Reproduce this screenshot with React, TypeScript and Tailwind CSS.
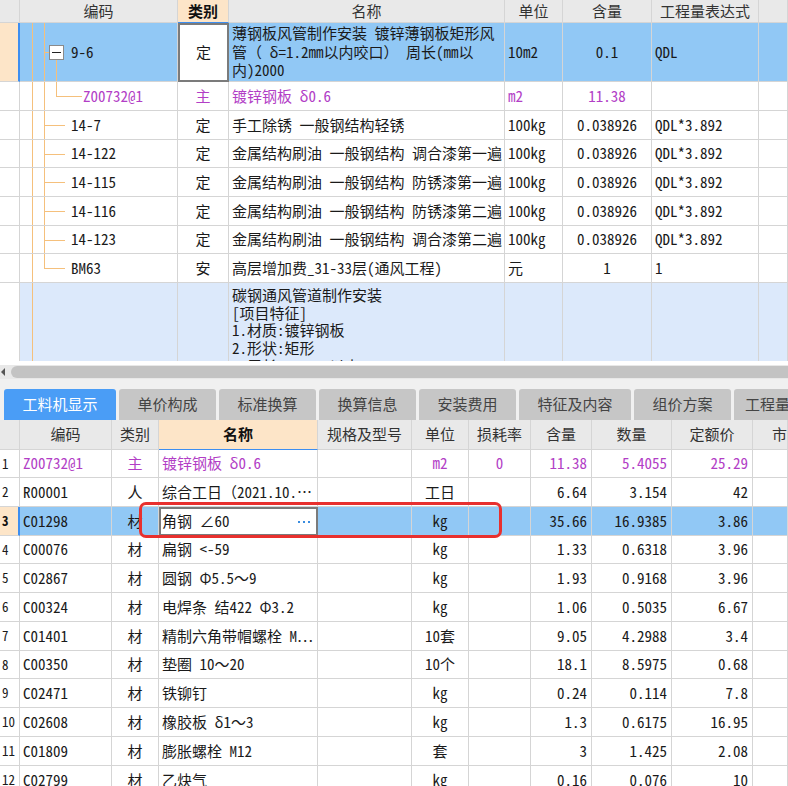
import React from 'react';

const FONT = "font-['Noto_Sans_Mono_CJK_SC','Noto_Sans_CJK_SC',sans-serif]";
const TOP_COLS = 'grid grid-cols-[20px_158px_51px_276px_58px_89px_107px_29px]';
const BOT_COLS = 'grid grid-cols-[20px_92px_47px_159px_94px_57px_62px_61px_80px_81px_35px]';
const CELL = 'border-r border-b border-[#d5d5d5] overflow-hidden whitespace-nowrap flex items-center';
const LINE = 'absolute bg-[#f5c07c]';
const MAG = 'text-[#b23ec6]';

type TopRow = { code: string; type: string; name: string; unit: string; qty: string; expr: string; h: number; last?: boolean };

const topRows: TopRow[] = [
  { code: '14-7', type: '定', name: '手工除锈 一般钢结构轻锈', unit: '100kg', qty: '0.038926', expr: 'QDL*3.892', h: 29 },
  { code: '14-122', type: '定', name: '金属结构刷油 一般钢结构 调合漆第一遍', unit: '100kg', qty: '0.038926', expr: 'QDL*3.892', h: 28 },
  { code: '14-115', type: '定', name: '金属结构刷油 一般钢结构 防锈漆第一遍', unit: '100kg', qty: '0.038926', expr: 'QDL*3.892', h: 29 },
  { code: '14-116', type: '定', name: '金属结构刷油 一般钢结构 防锈漆第二遍', unit: '100kg', qty: '0.038926', expr: 'QDL*3.892', h: 29 },
  { code: '14-123', type: '定', name: '金属结构刷油 一般钢结构 调合漆第二遍', unit: '100kg', qty: '0.038926', expr: 'QDL*3.892', h: 28 },
  { code: 'BM63', type: '安', name: '高层增加费_31-33层(通风工程)', unit: '元', qty: '1', expr: '1', h: 29, last: true },
];

type BotRow = { n: string; code: string; type: string; name: string; unit: string; loss?: string; a: string; b: string; c: string; h: number; mag?: boolean; sel?: boolean };

const botRows: BotRow[] = [
  { n: '1', code: 'Z00732@1', type: '主', name: '镀锌钢板 δ0.6', unit: 'm2', loss: '0', a: '11.38', b: '5.4055', c: '25.29', h: 28, mag: true },
  { n: '2', code: 'R00001', type: '人', name: '综合工日（2021.10.…', unit: '工日', a: '6.64', b: '3.154', c: '42', h: 29 },
  { n: '3', code: 'C01298', type: '材', name: '角钢 ∠60', unit: 'kg', a: '35.66', b: '16.9385', c: '3.86', h: 29, sel: true },
  { n: '4', code: 'C00076', type: '材', name: '扁钢 <-59', unit: 'kg', a: '1.33', b: '0.6318', c: '3.96', h: 28 },
  { n: '5', code: 'C02867', type: '材', name: '圆钢 Φ5.5～9', unit: 'kg', a: '1.93', b: '0.9168', c: '3.96', h: 29 },
  { n: '6', code: 'C00324', type: '材', name: '电焊条 结422 Φ3.2', unit: 'kg', a: '1.06', b: '0.5035', c: '6.67', h: 29 },
  { n: '7', code: 'C01401', type: '材', name: '精制六角带帽螺栓 M…', unit: '10套', a: '9.05', b: '4.2988', c: '3.4', h: 29 },
  { n: '8', code: 'C00350', type: '材', name: '垫圈 10～20', unit: '10个', a: '18.1', b: '8.5975', c: '0.68', h: 28 },
  { n: '9', code: 'C02471', type: '材', name: '铁铆钉', unit: 'kg', a: '0.24', b: '0.114', c: '7.8', h: 29 },
  { n: '10', code: 'C02608', type: '材', name: '橡胶板 δ1～3', unit: 'kg', a: '1.3', b: '0.6175', c: '16.95', h: 29 },
  { n: '11', code: 'C01809', type: '材', name: '膨胀螺栓 M12', unit: '套', a: '3', b: '1.425', c: '2.08', h: 29 },
  { n: '12', code: 'C02799', type: '材', name: '乙炔气', unit: 'kg', a: '0.16', b: '0.076', c: '10', h: 29 },
];

const tabs = [
  { t: '工料机显示', w: 'w-[112px]', active: true },
  { t: '单价构成', w: 'w-[97px]' },
  { t: '标准换算', w: 'w-[97px]' },
  { t: '换算信息', w: 'w-[97px]' },
  { t: '安装费用', w: 'w-[97px]' },
  { t: '特征及内容', w: 'w-[112px]' },
  { t: '组价方案', w: 'w-[97px]' },
  { t: '工程量明细', w: 'w-[97px]' },
];

function TopHeader() {
  const h = `${CELL} justify-center bg-[#e9e9e9] text-[#333]`;
  return (
    <div className={`${TOP_COLS} h-[23px]`}>
      <div className={h} />
      <div className={h}>编码</div>
      <div className={`${CELL} justify-center bg-[#fde5c8] font-bold text-[#111] border-b-[#3d8ef0]`}>类别</div>
      <div className={h}>名称</div>
      <div className={h}>单位</div>
      <div className={h}>含量</div>
      <div className={h}>工程量表达式</div>
      <div className={h} />
    </div>
  );
}

function TopMain() {
  return (
    <div className={`${TOP_COLS} h-[59px] bg-[#91c8f5]`}>
      <div className="border-b border-r-2 border-b-[#d5d5d5] border-r-[#3d8ef0] bg-[#fde5c8]" />
      <div className={`${CELL} relative pl-[51px]`}>
        <span className={`${LINE} left-[12px] top-0 bottom-[-1px] w-px`} />
        <span className={`${LINE} left-[24px] top-0 bottom-[-1px] w-px`} />
        <span className={`${LINE} left-[24px] top-[29px] w-[5px] h-px`} />
        <span className={`${LINE} left-[36px] top-[37px] bottom-[-1px] w-px`} />
        <span className="absolute left-[29px] top-[22px] w-[15px] h-[15px] border border-[#8a8a8a] bg-white flex items-center justify-center">
          <span className="w-[9px] h-px bg-[#222]" />
        </span>
        <span>9-6</span>
      </div>
      <div className="border-2 border-[#7b7b7b] bg-white flex items-center justify-center">定</div>
      <div className={`${CELL} pl-[3px] leading-[18.5px]`}>
        <div className="flex flex-col">
          <span>薄钢板风管制作安装 镀锌薄钢板矩形风</span>
          <span>管（ δ=1.2mm以内咬口） 周长(mm以</span>
          <span>内)2000</span>
        </div>
      </div>
      <div className={`${CELL} pl-[3px]`}>10m2</div>
      <div className={`${CELL} justify-center`}>0.1</div>
      <div className={`${CELL} pl-[3px]`}>QDL</div>
      <div className={CELL} />
    </div>
  );
}

function TopSub() {
  return (
    <div className={`${TOP_COLS} h-[29px] bg-white ${MAG}`}>
      <div className={CELL} />
      <div className={`${CELL} relative pl-[63px]`}>
        <span className={`${LINE} left-[12px] top-0 bottom-[-1px] w-px`} />
        <span className={`${LINE} left-[24px] top-0 bottom-[-1px] w-px`} />
        <span className={`${LINE} left-[36px] top-0 h-[14px] w-px`} />
        <span className={`${LINE} left-[36px] top-[14px] w-[26px] h-px`} />
        <span>Z00732@1</span>
      </div>
      <div className={`${CELL} justify-center`}>主</div>
      <div className={`${CELL} pl-[3px]`}>镀锌钢板 δ0.6</div>
      <div className={`${CELL} pl-[3px]`}>m2</div>
      <div className={`${CELL} justify-center`}>11.38</div>
      <div className={CELL} />
      <div className={CELL} />
    </div>
  );
}

function TopItem({ r }: { r: TopRow }) {
  return (
    <div className={`${TOP_COLS} ${r.h === 28 ? 'h-[28px]' : 'h-[29px]'} bg-white`}>
      <div className={CELL} />
      <div className={`${CELL} relative pl-[51px]`}>
        <span className={`${LINE} left-[12px] top-0 bottom-[-1px] w-px`} />
        {r.last ? (
          <span className={`${LINE} left-[24px] top-0 h-[14px] w-px`} />
        ) : (
          <span className={`${LINE} left-[24px] top-0 bottom-[-1px] w-px`} />
        )}
        <span className={`${LINE} left-[24px] top-[14px] w-[21px] h-px`} />
        <span>{r.code}</span>
      </div>
      <div className={`${CELL} justify-center`}>{r.type}</div>
      <div className={`${CELL} pl-[3px]`}>{r.name}</div>
      <div className={`${CELL} pl-[3px]`}>{r.unit}</div>
      <div className={`${CELL} justify-center`}>{r.qty}</div>
      <div className={`${CELL} pl-[3px]`}>{r.expr}</div>
      <div className={CELL} />
    </div>
  );
}

function TopFeature() {
  const c = 'border-r border-[#d5d5d5] bg-[#dce9fb]';
  return (
    <div className={`${TOP_COLS} h-[78px] overflow-hidden`}>
      <div className="border-r border-[#d5d5d5] bg-white" />
      <div className={`${c} relative`}>
        <span className={`${LINE} left-[12px] top-0 bottom-0 w-px`} />
      </div>
      <div className={c} />
      <div className={`${c} pl-[3px] pt-[3px] leading-[17.7px] overflow-hidden flex flex-col whitespace-nowrap`}>
        <span>碳钢通风管道制作安装</span>
        <span>[项目特征]</span>
        <span>1.材质:镀锌钢板</span>
        <span>2.形状:矩形</span>
        <span>3.周长:4000mm以内</span>
      </div>
      <div className={c} />
      <div className={c} />
      <div className={c} />
      <div className={c} />
    </div>
  );
}

function BotHeader() {
  const h = `${CELL} justify-center bg-[#e9e9e9] text-[#333]`;
  return (
    <div className={`${BOT_COLS} h-[30px]`}>
      <div className={h} />
      <div className={h}>编码</div>
      <div className={h}>类别</div>
      <div className={`${CELL} justify-center bg-[#fde5c8] font-bold text-[#111] border-b-[#3d8ef0]`}>名称</div>
      <div className={h}>规格及型号</div>
      <div className={h}>单位</div>
      <div className={h}>损耗率</div>
      <div className={h}>含量</div>
      <div className={h}>数量</div>
      <div className={h}>定额价</div>
      <div className={`${h} justify-start pl-[19px]`}>市场价</div>
    </div>
  );
}

function BotItem({ r }: { r: BotRow }) {
  const color = r.mag ? MAG : 'text-[#1a1a1a]';
  return (
    <div className={`${BOT_COLS} ${r.h === 28 ? 'h-[28px]' : 'h-[29px]'} ${r.sel ? 'bg-[#91c8f5]' : 'bg-white'} ${color}`}>
      {r.sel ? (
        <div className="border-b border-r-2 border-b-[#d5d5d5] border-r-[#3d8ef0] bg-[#fde5c8] flex items-center pl-[2px] text-[13px] font-bold text-[#111]">
          {r.n}
        </div>
      ) : (
        <div className={`${CELL} pl-[2px] text-[13px] text-[#1a1a1a] bg-white`}>{r.n}</div>
      )}
      <div className={`${CELL} pl-[3px]`}>{r.code}</div>
      <div className={`${CELL} justify-center`}>{r.type}</div>
      {r.sel ? (
        <div className="border-2 border-[#7b7b7b] bg-white flex items-center justify-between pl-[1px] pr-[6px] whitespace-nowrap overflow-hidden">
          <span>{r.name}</span>
          <span className="flex gap-[3px]">
            <span className="w-[2px] h-[2px] bg-[#3a8de0]" />
            <span className="w-[2px] h-[2px] bg-[#3a8de0]" />
            <span className="w-[2px] h-[2px] bg-[#3a8de0]" />
          </span>
        </div>
      ) : (
        <div className={`${CELL} pl-[3px]`}>{r.name}</div>
      )}
      <div className={CELL} />
      <div className={`${CELL} justify-center`}>{r.unit}</div>
      <div className={`${CELL} justify-center`}>{r.loss ?? ''}</div>
      <div className={`${CELL} justify-end pr-[4px]`}>{r.a}</div>
      <div className={`${CELL} justify-end pr-[4px]`}>{r.b}</div>
      <div className={`${CELL} justify-end pr-[4px]`}>{r.c}</div>
      <div className={CELL} />
    </div>
  );
}

export default function App() {
  return (
    <div className={`relative w-[788px] h-[786px] overflow-hidden bg-white text-[15px] text-[#1a1a1a] ${FONT}`}>
      <div className="h-[361px] overflow-hidden flex flex-col">
        <TopHeader />
        <TopMain />
        <TopSub />
        {topRows.map((r) => (
          <TopItem key={r.code} r={r} />
        ))}
        <TopFeature />
      </div>

      <div className="h-[4px] bg-white" />
      <div className="h-[14px] bg-[#e8e8e8] flex items-center">
        <div className="w-[11px] h-full flex items-center pl-[1px]">
          <span className="w-0 h-0 border-y-[4px] border-y-transparent border-r-[4px] border-r-[#555]" />
        </div>
        <div className="flex-1 h-[12px] rounded-l-full bg-[#c3c3c3]" />
      </div>
      <div className="h-[10px] bg-[#f0f0f0]" />

      <div className="h-[31px] bg-[#f0f0f0] flex items-end gap-[3px] pl-[4px] overflow-hidden">
        {tabs.map((t) => (
          <div
            key={t.t}
            className={`${t.w} shrink-0 h-[31px] rounded-t-[3px] flex items-center justify-center whitespace-nowrap overflow-hidden ${
              t.active ? 'bg-[#4a9df6] text-white' : 'bg-[#c6c6c6] text-[#444]'
            }`}
          >
            {t.t}
          </div>
        ))}
      </div>

      <div className="flex flex-col">
        <BotHeader />
        {botRows.map((r) => (
          <BotItem key={r.n} r={r} />
        ))}
      </div>

      <div className="absolute left-[139px] top-[502px] w-[363px] h-[36px] border-[3px] border-[#e8302e] rounded-[7px] pointer-events-none" />
    </div>
  );
}
